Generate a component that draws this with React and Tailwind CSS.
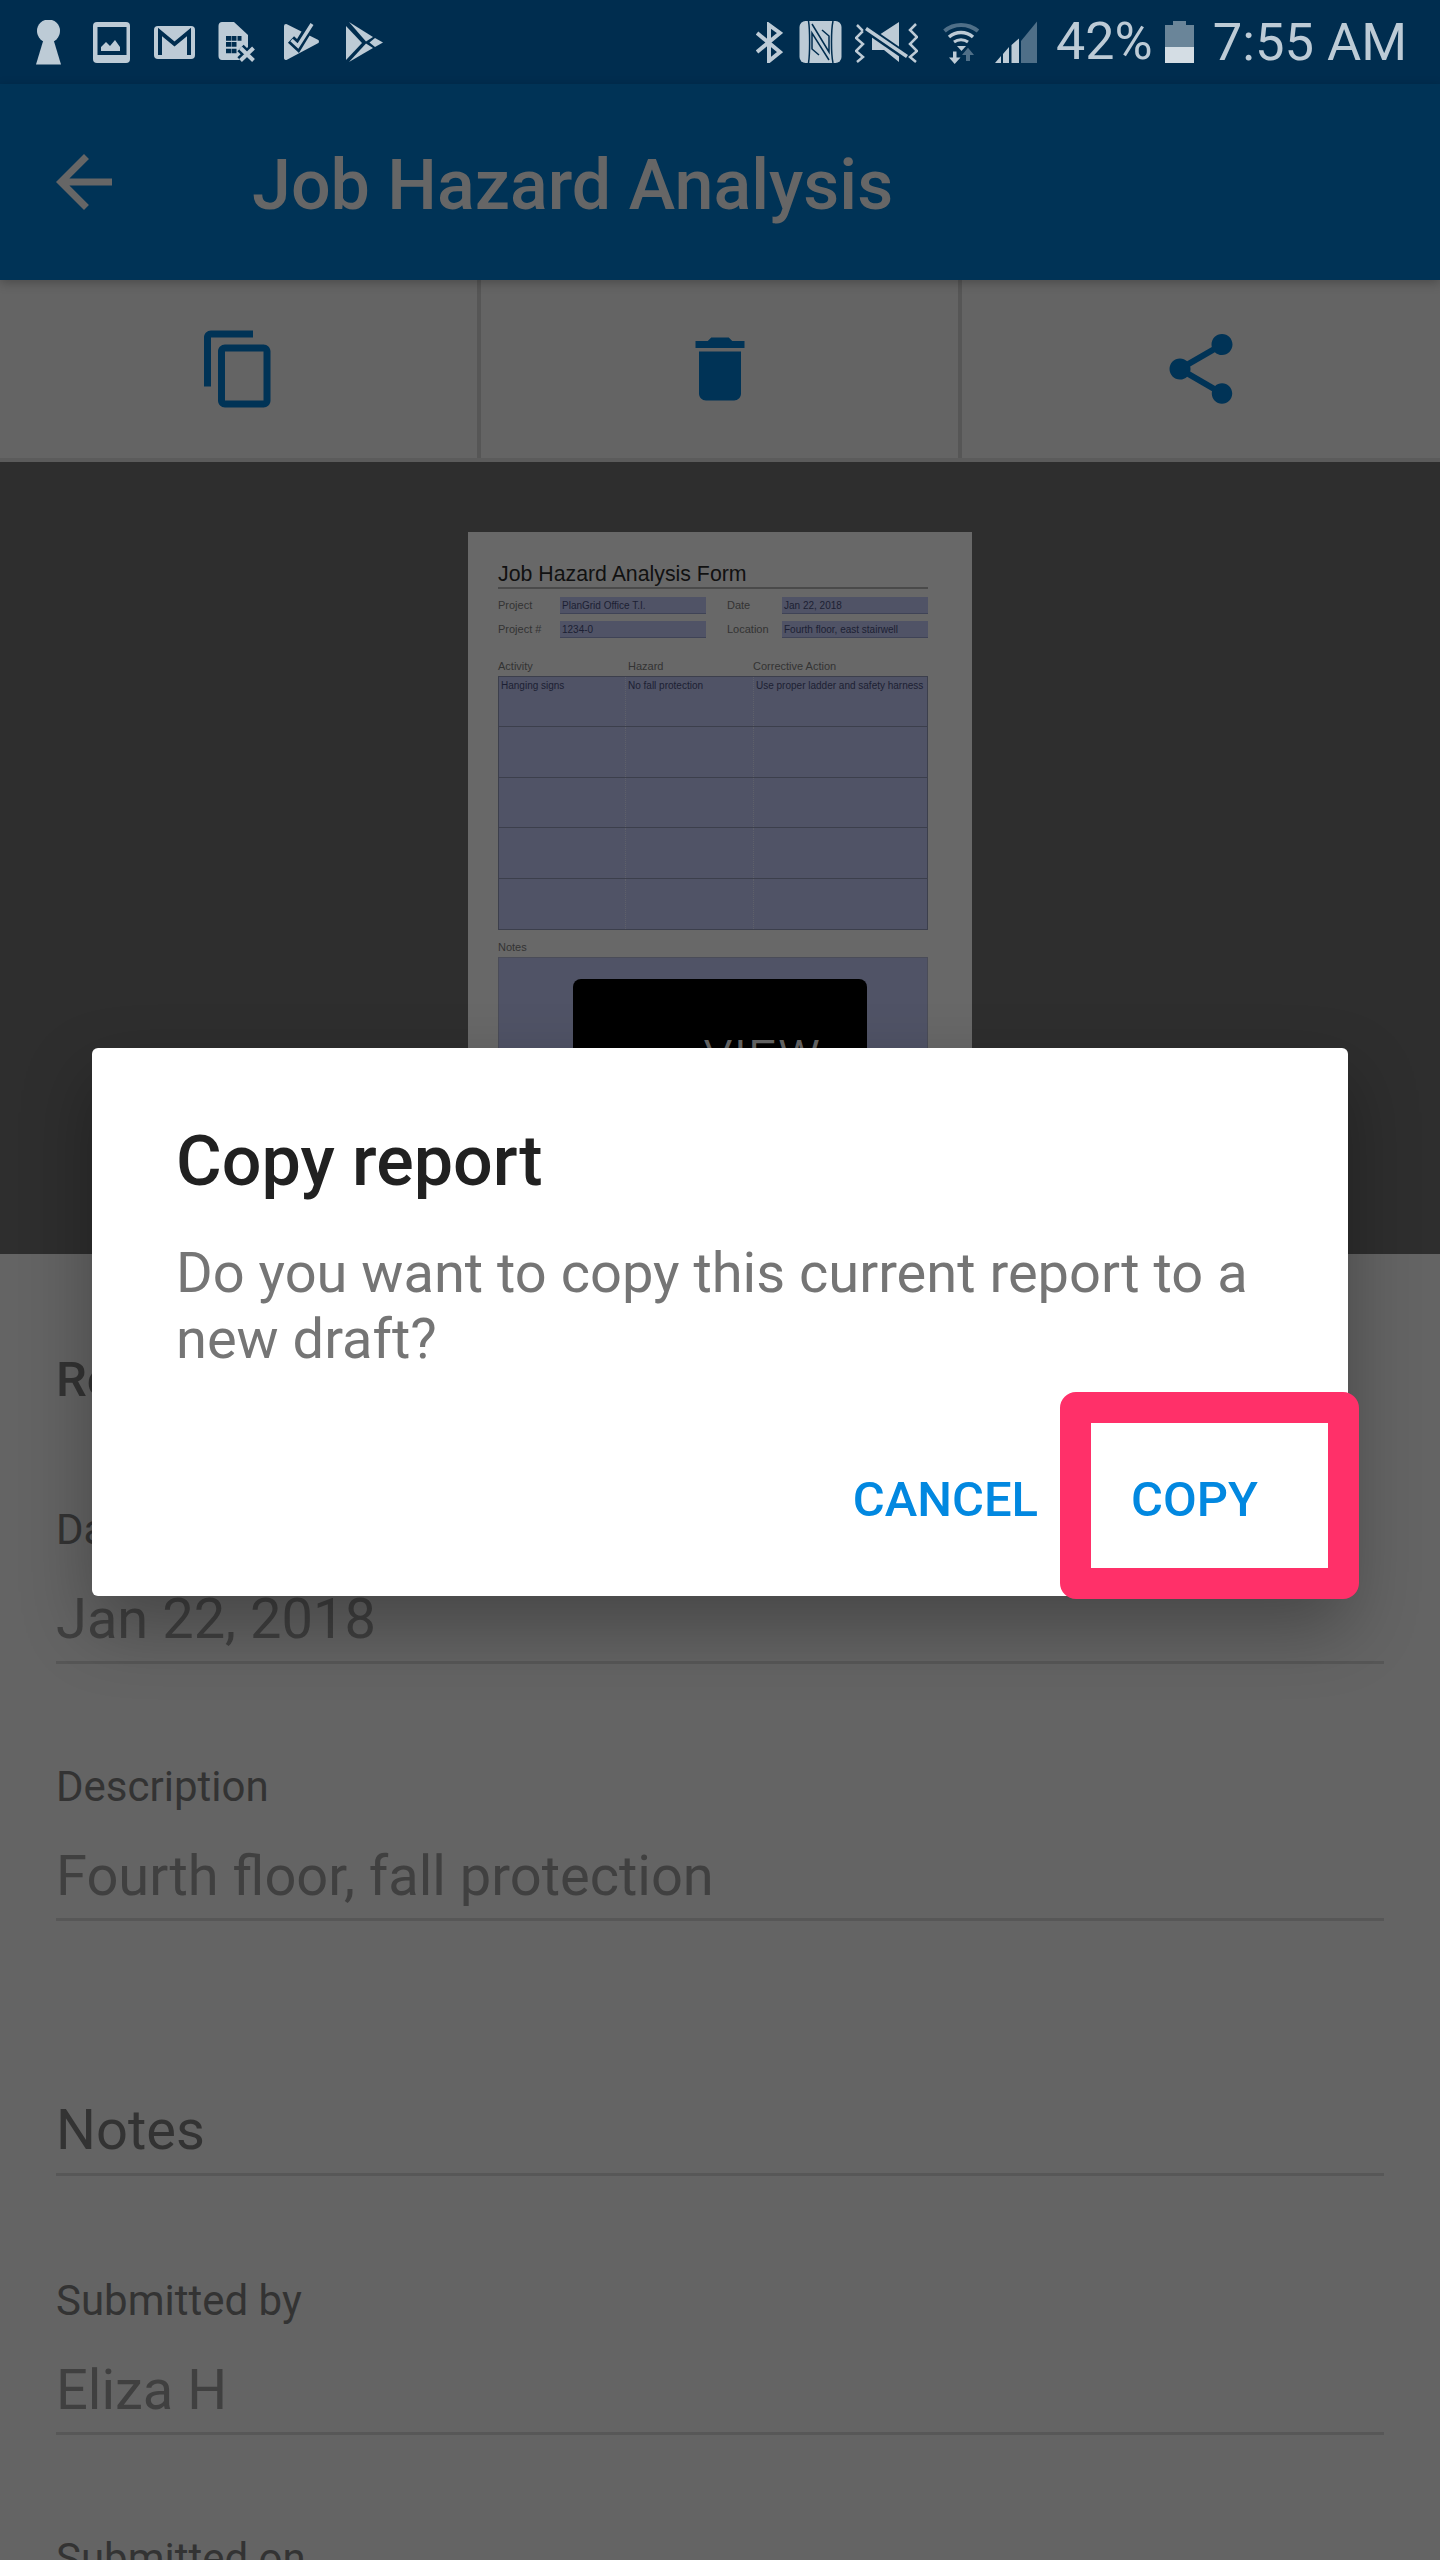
import React from "react";

const LIGHT = "#bdcbd6";
const DARK = "#002d4f";
const DIM = "#4f6f88";

function StatusIcons() {
  return (
    <div className="flex items-center">
      {/* keyhole */}
      <svg width="25" height="45" viewBox="36 20 25 45">
        <circle cx="48.5" cy="31" r="11.5" fill={LIGHT} />
        <path d="M44 38L36 64.5H61L53 38Z" fill={LIGHT} />
      </svg>
      {/* gallery */}
      <svg className="ml-8" width="37" height="41" viewBox="93 22 37 41">
        <rect x="93" y="22" width="37" height="41" rx="4" fill={LIGHT} />
        <rect x="97.5" y="27" width="29" height="28" fill={DARK} />
        <path d="M101 51V47L106 42L110 46L115 40L120 47V51Z" fill={LIGHT} />
      </svg>
      {/* gmail */}
      <svg className="ml-6" width="41" height="33" viewBox="154 26 41 33">
        <rect x="154" y="26" width="41" height="33" rx="4" fill={LIGHT} />
        <path d="M160 55V32L174.5 44L189 32V55" fill="none" stroke={DARK} strokeWidth="4" />
      </svg>
      {/* sim error */}
      <svg className="ml-[23px]" width="38" height="41" viewBox="218 22 38 41">
        <path d="M222 22H234L248 35V56C248 58.5 246.5 60 244 60H222C220 60 218.5 58.5 218.5 56V26C218.5 23.5 220 22 222 22Z" fill={LIGHT} />
        <path d="M226 36h5v4.7h-5zM231.5 36h5v4.7h-5zM237.5 36h4v4.7h-4zM226 42h5v4.7h-5zM226 48.7h5v4.5h-5zM231.5 48.7h5v4.5h-5zM231.5 42h5v4.7h-5z" fill={DARK} />
        <path d="M240.5 48L253.5 60.5M253.5 48L240.5 60.5" stroke={DARK} strokeWidth="9" />
        <path d="M240.5 48L253.5 60.5M253.5 48L240.5 60.5" stroke={LIGHT} strokeWidth="4" />
      </svg>
      {/* play tasks */}
      <svg className="ml-7" width="36" height="38" viewBox="284 24 36 38">
        <path d="M286 27L317 42.5L286 59Z" fill={LIGHT} stroke={LIGHT} strokeWidth="4" strokeLinejoin="round" />
        <path d="M291 40.5L298 47L312 24" fill="none" stroke={DARK} strokeWidth="9" />
        <path d="M291.5 41L298 47L312 25" fill="none" stroke={LIGHT} strokeWidth="3.5" />
      </svg>
      {/* play store */}
      <svg className="ml-[26px]" width="38" height="41" viewBox="346 22 38 41">
        <path d="M346 26V60L362 43Z" fill={LIGHT} />
        <path d="M349 22L373 37L366 41.5Z" fill={LIGHT} />
        <path d="M349 62L373 48L366 43.5Z" fill={LIGHT} />
        <path d="M375 38L383 42.5L375 47L369.5 42.5Z" fill={LIGHT} />
      </svg>
    </div>
  );
}

function SystemIcons() {
  return (
    <div className="flex items-center">
      {/* bluetooth */}
      <svg width="27" height="41" viewBox="757 22 27 41">
        <path d="M758 33L781 52L770 61V25L781 33L758 52" fill="none" stroke={LIGHT} strokeWidth="4" />
      </svg>
      {/* nfc */}
      <svg className="ml-4" width="43" height="42" viewBox="800 21 43 42">
        <rect x="800.5" y="21" width="42" height="42" rx="6" fill={LIGHT} />
        <path d="M809.5 21C811 30 811 54 809.5 63M834 21C832 30 832 54 834 63" fill="none" stroke={DARK} strokeWidth="1.5" />
        <path d="M813 24L830 52V36L823 30M830 60L813 33V49L820 55" fill="none" stroke={DARK} strokeWidth="1.5" />
      </svg>
      {/* vibrate off */}
      <svg className="ml-[13px]" width="63" height="41" viewBox="856 22 63 41">
        <path d="M858 25L864 31L857 38L864 44L857 51L864 57L858 62M917 24L911 30L918 37L911 44L918 51L911 57L917 62" fill="none" stroke={LIGHT} strokeWidth="2.5" />
        <path d="M873 35H880L900 22V62L885 50H873Z" fill={LIGHT} />
        <path d="M866 28L908 57" stroke={DARK} strokeWidth="8" />
        <path d="M867 28.5L908 56.5" stroke={LIGHT} strokeWidth="3.5" />
      </svg>
      {/* wifi */}
      <svg className="ml-[25px]" width="37" height="43" viewBox="944 20 37 43">
        <path d="M945.5 30C955 22 969 22 979 30" fill="none" stroke={DIM} strokeWidth="4" />
        <path d="M950 36C957 30 967 30 974 36" fill="none" stroke={LIGHT} strokeWidth="3.5" />
        <path d="M955 41C959 38 965 38 969 41" fill="none" stroke={LIGHT} strokeWidth="3" />
        <path d="M958 45H967L962.5 50Z" fill={LIGHT} />
        <path d="M954 50.5h3.5v6h4L955.7 63L950 56.5h4Z" fill={LIGHT} />
        <path d="M963 54L969 46.7L975 54h-4v6h-4v-6Z" fill={DIM} />
      </svg>
      {/* signal */}
      <svg className="ml-[14px]" width="43" height="43" viewBox="995 20 43 43">
        <path d="M1022 62V40L1038 20.5V62Z" fill={DIM} />
        <path d="M996 62L1002 55V62ZM1004 62V53L1010 46V62ZM1012.5 62V44L1020 37.5V62Z" fill={LIGHT} />
      </svg>
      <span className="ml-[19px] text-[52px] leading-[60px] text-[#bdcbd6]">42%</span>
      {/* battery */}
      <div className="ml-3 flex h-[42px] w-[29px] flex-col items-center">
        <div className="h-[4px] w-[13px] bg-[#6a8599]" />
        <div className="h-[22px] w-full bg-[#6a8599]" />
        <div className="h-[16px] w-full bg-[#d4dde4]" />
      </div>
      <span className="ml-[19px] text-[52.5px] leading-[60px] text-[#bdcbd6]">7:55 AM</span>
    </div>
  );
}

function ToolbarCell({ children, last }) {
  return (
    <div className={`flex items-center justify-center ${last ? "flex-1" : "w-[481px] border-r-4 border-[#565656]"}`}>
      <svg width="84" height="84" viewBox="0 0 24 24" fill="#003356">
        {children}
      </svg>
    </div>
  );
}

function Field({ label, value, className = "" }) {
  return (
    <div className={className}>
      <div className="text-[42px] leading-[50px] text-[#333333]">{label}</div>
      <div className="mt-[31px] pb-[9px] text-[56px] leading-[66px] text-[#404040]">{value}</div>
      <div className="h-[3px] bg-[#575757]" />
    </div>
  );
}

function FormField({ children }) {
  return (
    <div className="flex h-[17px] w-[146px] items-center border-b border-[#3f4356] bg-[#505366] pl-[2px] pt-px text-[10px] text-[#1c1f33]">
      {children}
    </div>
  );
}

function DocumentPreview() {
  const rows = [0, 1, 2, 3, 4];
  return (
    <div className="h-[792px] overflow-hidden bg-[#2e2e2e]">
      <div className="mx-auto mt-[70px] h-[800px] w-[504px] bg-[#686868] pl-[30px] pr-[44px] pt-[30px] font-['Liberation_Sans',sans-serif]">
        <div className="border-b-2 border-[#4a4a4a] pb-px text-[21.3px] leading-[24px] text-[#111111]">
          Job Hazard Analysis Form
        </div>
        <div className="mt-[8px] flex items-center text-[11px] text-[#333333]">
          <span className="w-[62px]">Project</span>
          <FormField>PlanGrid Office T.I.</FormField>
          <span className="ml-[21px] w-[55px]">Date</span>
          <FormField>Jan 22, 2018</FormField>
        </div>
        <div className="mt-[7px] flex items-center text-[11px] text-[#333333]">
          <span className="w-[62px]">Project #</span>
          <FormField>1234-0</FormField>
          <span className="ml-[21px] w-[55px]">Location</span>
          <FormField>Fourth floor, east stairwell</FormField>
        </div>
        <div className="mt-[21px] grid grid-cols-[130px_125px_175px] text-[11px] leading-[14px] text-[#333333]">
          <span>Activity</span>
          <span>Hazard</span>
          <span>Corrective Action</span>
        </div>
        <div className="mt-[3px] border border-[#3c3f4c] bg-[#505366] text-[10px] leading-[18px] text-[#1c1f33]">
          {rows.map((r) => (
            <div
              key={r}
              className={`grid h-[50.4px] grid-cols-[127px_128px_1fr] ${r < 4 ? "border-b border-[#3c3f4c]" : ""}`}
            >
              <div className="border-r border-dotted border-[#5e606a] pl-[2px]">{r === 0 && "Hanging signs"}</div>
              <div className="border-r border-dotted border-[#5e606a] pl-[2px]">{r === 0 && "No fall protection"}</div>
              <div className="pl-[2px]">{r === 0 && "Use proper ladder and safety harness"}</div>
            </div>
          ))}
        </div>
        <div className="mt-[10px] text-[11px] leading-[14px] text-[#333333]">Notes</div>
        <div className="mt-[3px] h-[300px] border border-[#4a4c58] bg-[#505366] pl-[74px] pt-[21px]">
          <div className="h-[200px] w-[294px] rounded-lg bg-black pl-[131px] pt-[52px] text-[42px] leading-[48px] tracking-[2.5px] text-[#666666]">
            VIEW
          </div>
        </div>
      </div>
    </div>
  );
}

function CopyDialog() {
  return (
    <div className="absolute left-[92px] top-[1048px] h-[548px] w-[1256px] rounded-md bg-white px-[84px] pt-[72px] shadow-[0_30px_70px_rgba(0,0,0,0.3)]">
      <div className="text-[70px] font-medium leading-[82px] text-[#212121]">Copy report</div>
      <div className="mt-[38px] text-[56px] leading-[66px] text-[#757575]">
        Do you want to copy this current report to a new draft?
      </div>
      <div className="mt-[99px] flex justify-end gap-[93px] pr-[6px] text-[49px] font-medium leading-[58px] text-[#0288e0]">
        <span>CANCEL</span>
        <span>COPY</span>
      </div>
      {/* highlight around the copy button */}
      <div className="absolute left-[968px] top-[344px] h-[207px] w-[299px] rounded-2xl border-[31px] border-[#ff3069]" />
    </div>
  );
}

export default function App() {
  return (
    <div className="relative h-[2560px] w-[1440px] overflow-hidden bg-[#646464] font-['Roboto',sans-serif]">
      <div className="flex h-[84px] items-center justify-between bg-[#002d4f] pl-[36px] pr-[33px]">
        <StatusIcons />
        <SystemIcons />
      </div>

      <div className="relative z-10 flex h-[196px] items-center bg-[#003356] pl-[42px] shadow-[0_3px_10px_rgba(0,0,0,0.25)]">
        <svg width="84" height="84" viewBox="0 0 24 24" fill="#666666">
          <path d="M20 11H7.83l5.59-5.59L12 4l-8 8 8 8 1.41-1.41L7.83 13H20v-2z" />
        </svg>
        <span className="ml-[126px] pt-[6px] text-[70px] font-medium leading-[82px] text-[#666666]">Job Hazard Analysis</span>
      </div>

      <div className="flex h-[182px] border-b-4 border-[#5b5b5b] bg-[#646464]">
        <ToolbarCell>
          <path d="M16 1H4c-1.1 0-2 .9-2 2v14h2V3h12V1zm3 4H8c-1.1 0-2 .9-2 2v14c0 1.1.9 2 2 2h11c1.1 0 2-.9 2-2V7c0-1.1-.9-2-2-2zm0 16H8V7h11v14z" />
        </ToolbarCell>
        <ToolbarCell>
          <path d="M6 19c0 1.1.9 2 2 2h8c1.1 0 2-.9 2-2V7H6v12zM19 4h-3.5l-1-1h-5l-1 1H5v2h14V4z" />
        </ToolbarCell>
        <ToolbarCell last>
          <path d="M18 16.08c-.76 0-1.44.3-1.96.77L8.91 12.7c.05-.23.09-.46.09-.7s-.04-.47-.09-.7l7.05-4.11c.54.5 1.25.81 2.04.81 1.66 0 3-1.34 3-3s-1.34-3-3-3-3 1.34-3 3c0 .24.04.47.09.7L8.04 9.81C7.5 9.31 6.79 9 6 9c-1.66 0-3 1.34-3 3s1.34 3 3 3c.79 0 1.5-.31 2.04-.81l7.12 4.16c-.05.21-.08.43-.08.65 0 1.61 1.31 2.92 2.92 2.92 1.61 0 2.92-1.31 2.92-2.92s-1.31-2.92-2.92-2.92z" />
        </ToolbarCell>
      </div>

      <DocumentPreview />

      <div className="px-14 pt-[97px]">
        <div className="text-[49px] font-medium leading-[58px] text-[#333333]">Report details</div>
        <Field className="mt-[96px]" label="Date" value="Jan 22, 2018" />
        <Field className="mt-[98px]" label="Description" value="Fourth floor, fall protection" />
        <div className="mt-[176px] pb-[10px] text-[56px] leading-[66px] text-[#333333]">Notes</div>
        <div className="h-[3px] bg-[#575757]" />
        <Field className="mt-[100px]" label="Submitted by" value="Eliza H" />
        <div className="mt-[99px] text-[42px] leading-[50px] text-[#333333]">Submitted on</div>
      </div>

      <CopyDialog />
    </div>
  );
}
